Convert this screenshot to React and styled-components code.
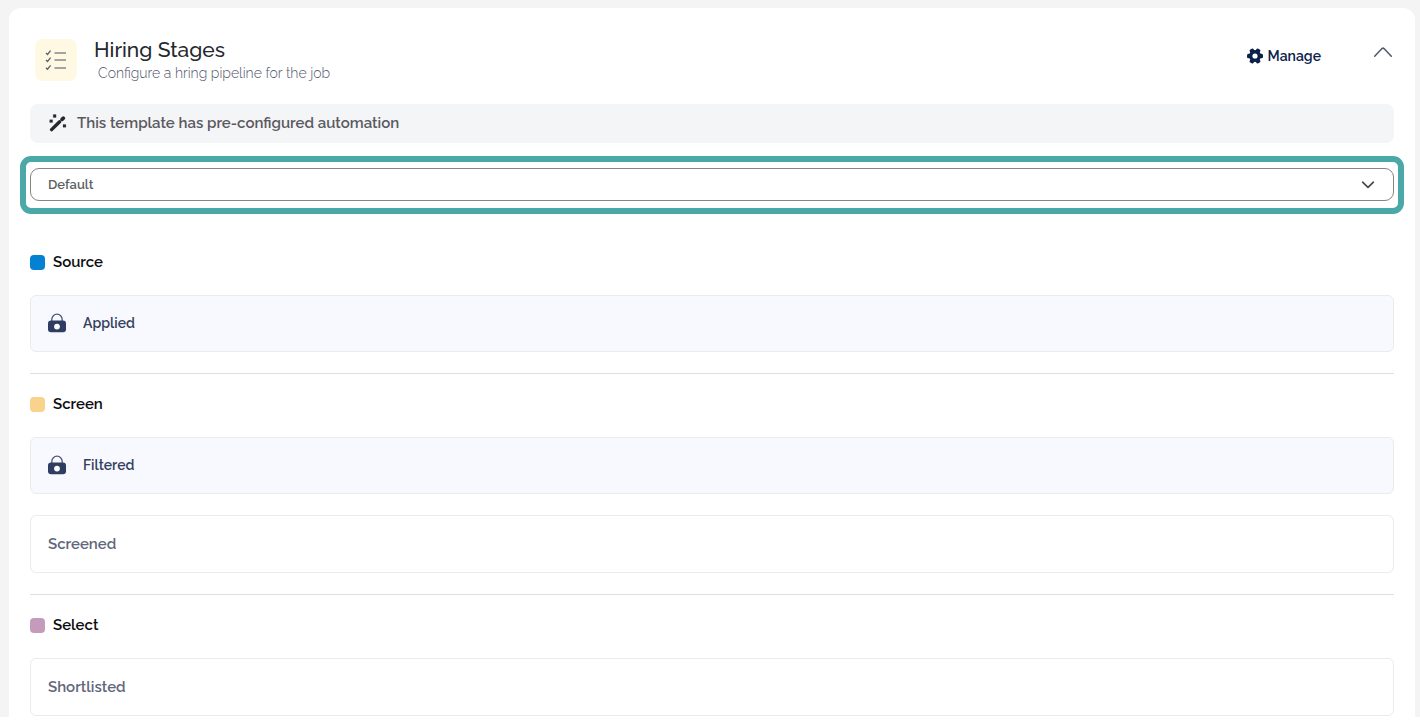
import React, { useState } from "react";
import styled, { createGlobalStyle } from "styled-components";

const pipeline = [
  { name: "Source", color: "#0581d3", stages: [{ name: "Applied", locked: true }] },
  {
    name: "Screen",
    color: "#f9d38b",
    stages: [{ name: "Filtered", locked: true }, { name: "Screened" }]
  },
  { name: "Select", color: "#c49bbb", stages: [{ name: "Shortlisted" }] }
];

const ChecklistIcon = () => (
  <svg width="22" height="22" viewBox="0 0 22 22" fill="none" aria-hidden="true">
    <path
      d="M1 4l1.5 1.5L5.6 1.6M1 11l1.5 1.5 3.1-3.9M1 18.7l1.5 1.5 3.1-3.9"
      stroke="#5c5f6e"
      strokeWidth="1.3"
    />
    <path d="M9.5 4H21M9.5 11H21M9.5 19H21" stroke="#85868f" strokeWidth="1.7" />
  </svg>
);

const WandIcon = () => (
  <svg width="18" height="18" viewBox="0 0 18 18" fill="none" aria-hidden="true">
    <path d="M2.6 15.6L10.6 7.8" stroke="#25282d" strokeWidth="3.4" strokeLinecap="round" />
    <path d="M13 5.4l1.4-1.3" stroke="#25282d" strokeWidth="3.6" strokeLinecap="round" />
    <path
      d="M4.2.6h2.9v2.9H4.2zM.7 5.7h2.9v2.9H.7zM14 10.4h2.9v2.9H14z"
      fill="#25282d"
      stroke="#25282d"
      strokeWidth=".2"
    />
  </svg>
);

const GearIcon = () => (
  <svg width="16" height="16" viewBox="0 0 16 16" aria-hidden="true">
    <g fill="#0b2149">
      <circle cx="8" cy="8" r="6" />
      <rect x="0" y="5.8" width="16" height="4.4" rx="1.5" />
      <rect x="0" y="5.8" width="16" height="4.4" rx="1.5" transform="rotate(60 8 8)" />
      <rect x="0" y="5.8" width="16" height="4.4" rx="1.5" transform="rotate(120 8 8)" />
    </g>
    <circle cx="8" cy="8" r="2.6" fill="#fff" />
  </svg>
);

const ChevronIcon = ({ flipped }) => (
  <svg width="18" height="10" viewBox="0 0 18 10" fill="none" aria-hidden="true">
    <path
      d={flipped ? "M.7 1L9 9l8.3-8" : "M.7 9.2L8 1.6q1-.9 2 0l7.3 7.6"}
      stroke="#50546a"
      strokeWidth="1.5"
      strokeLinecap="round"
    />
  </svg>
);

const LockIcon = () => (
  <svg width="18" height="20" viewBox="0 0 18 20" fill="none" aria-hidden="true">
    <path d="M3.8 9V6.4a5.2 5.2 0 0 1 10.4 0V9" stroke="#4a5677" strokeWidth="1.3" />
    <rect y="7.6" width="18" height="11.6" rx="3" fill="#2f3d63" />
    <circle cx="9" cy="13.6" r="2.9" fill="#fff" />
  </svg>
);

const App = () => {
  const [open, setOpen] = useState(true);
  const [template, setTemplate] = useState("Default");

  return (
    <Page>
      <GlobalStyle />
      <Card>
        <Header>
          <IconTile>
            <ChecklistIcon />
          </IconTile>
          <Heading>
            <Title>Hiring Stages</Title>
            <Subtitle>Configure a hring pipeline for the job</Subtitle>
          </Heading>
          <ManageButton type="button">
            <GearIcon />
            Manage
          </ManageButton>
          <CollapseButton
            type="button"
            aria-label="Toggle hiring stages"
            aria-expanded={open}
            onClick={() => setOpen(!open)}
          >
            <ChevronIcon flipped={!open} />
          </CollapseButton>
        </Header>

        {open && (
          <>
            <Banner>
              <WandIcon />
              This template has pre-configured automation
            </Banner>

            <Highlight>
              <SelectBox>
                <Select
                  aria-label="Pipeline template"
                  value={template}
                  onChange={event => setTemplate(event.target.value)}
                >
                  <option>Default</option>
                </Select>
                <svg width="14" height="8" viewBox="0 0 14 8" fill="none" aria-hidden="true">
                  <path
                    d="M1.6 1.2L7 6.4l5.4-5.2"
                    stroke="#444"
                    strokeWidth="1.6"
                    strokeLinecap="round"
                    strokeLinejoin="round"
                  />
                </svg>
              </SelectBox>
            </Highlight>

            {pipeline.map(group => (
              <Group key={group.name}>
                <GroupTitle>
                  <Swatch $color={group.color} />
                  {group.name}
                </GroupTitle>
                {group.stages.map(stage => (
                  <Stage key={stage.name} $locked={stage.locked}>
                    {stage.locked && <LockIcon />}
                    {stage.name}
                  </Stage>
                ))}
              </Group>
            ))}
          </>
        )}
      </Card>
    </Page>
  );
};

export default App;

const GlobalStyle = createGlobalStyle`
  * {
    box-sizing: border-box;
  }
  body {
    margin: 0;
    background: #fff;
    font-family: Raleway, Lato, sans-serif;
  }
  button, select {
    font-family: inherit;
  }
`;

const Page = styled.main`
  background: #f4f4f4;
  padding: 8px 5px 0 9px;
`;

const Card = styled.section`
  background: #fff;
  border-radius: 12px 12px 0 0;
  padding: 29px 21px 1px;
`;

const Header = styled.header`
  display: flex;
  align-items: flex-start;
  padding: 0 2px 0 5px;
  margin-bottom: 21px;
`;

const IconTile = styled.div`
  display: flex;
  align-items: center;
  justify-content: center;
  width: 42px;
  height: 42px;
  margin: 2px 17px 2px 0;
  border-radius: 8px;
  background: #fff8e2;
`;

const Heading = styled.div`
  flex: 1;
`;

const Title = styled.h1`
  margin: 0;
  font-size: 21px;
  font-weight: 500;
  line-height: 26px;
  color: #25282d;
`;

const Subtitle = styled.p`
  margin: 0;
  padding-left: 4px;
  font-size: 14px;
  font-weight: 300;
  line-height: 20px;
  color: #50546a;
`;

const ManageButton = styled.button`
  display: flex;
  align-items: center;
  gap: 5px;
  height: 38px;
  padding: 0;
  margin-right: 53px;
  border: 0;
  background: none;
  font-size: 14px;
  font-weight: 600;
  color: #0b2149;
  cursor: pointer;
`;

const CollapseButton = styled.button`
  display: flex;
  align-items: center;
  height: 30px;
  padding: 0;
  border: 0;
  background: none;
  cursor: pointer;
`;

const Banner = styled.div`
  display: flex;
  align-items: center;
  gap: 10px;
  height: 39px;
  padding: 0 19px 2px;
  border-radius: 8px;
  background: #f4f5f7;
  font-size: 15px;
  font-weight: 600;
  color: #5a5a5f;
`;

const Highlight = styled.div`
  margin: 13px -10px 36px;
  padding: 6px 4px 7px;
  border: 6px solid #4aa9a8;
  border-radius: 11px;
`;

const SelectBox = styled.div`
  display: grid;
  align-items: center;
  > * {
    grid-area: 1 / 1;
  }
  svg {
    justify-self: end;
    margin-right: 19px;
    pointer-events: none;
  }
`;

const Select = styled.select`
  appearance: none;
  width: 100%;
  height: 33px;
  padding: 0 17px;
  border: 1px solid #858585;
  border-radius: 9px;
  background: #fff;
  font-size: 13px;
  font-weight: 600;
  color: #5e5f64;
`;

const Group = styled.section`
  & + & {
    margin-top: 21px;
    padding-top: 18px;
    border-top: 1px solid #dedede;
  }
`;

const GroupTitle = styled.h2`
  display: flex;
  align-items: center;
  gap: 8px;
  margin: 0;
  font-size: 15px;
  font-weight: 600;
  line-height: 24px;
  color: #0c0c0e;
`;

const Swatch = styled.span`
  width: 15px;
  height: 15px;
  border-radius: 4px;
  background: ${props => props.$color};
`;

const Stage = styled.div`
  display: flex;
  align-items: center;
  gap: 17px;
  height: ${props => (props.$locked ? "57px" : "58px")};
  margin-top: 21px;
  padding: 0 17px 1px;
  border: 1px solid #ebebed;
  border-radius: 6px;
  background: ${props => (props.$locked ? "#f8f9fe" : "#fff")};
  font-size: ${props => (props.$locked ? "14px" : "15px")};
  font-weight: 600;
  color: ${props => (props.$locked ? "#34405f" : "#62677b")};
`;
